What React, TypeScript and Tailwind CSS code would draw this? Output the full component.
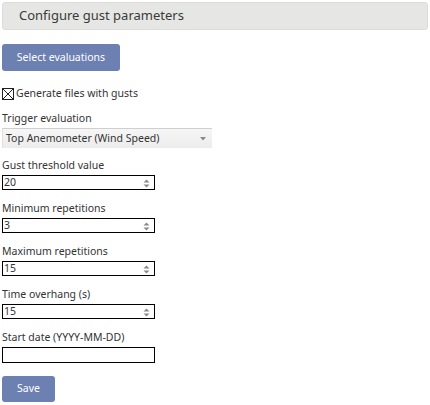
import React from "react";

function Spinner() {
  return (
    <svg width="7" height="9" viewBox="0 0 7 9" className="absolute right-[4px] top-[3px]">
      <path d="M0.5 3.5 L3.5 0.5 L6.5 3.5 Z" fill="#8a8a8a" />
      <path d="M0.5 5.5 L3.5 8.5 L6.5 5.5 Z" fill="#8a8a8a" />
    </svg>
  );
}

function NumberField({ label, value }: { label: string; value: string }) {
  return (
    <div className="flex flex-col">
      <div className="text-[10.5px] leading-[14px] text-[#333] pl-[2px] mb-[3px]">{label}</div>
      <div className="relative w-[153px] h-[15px] border border-black bg-white ml-[2px]">
        <span className="absolute left-[1px] top-[-1px] text-[10.5px] leading-[15px] text-[#333]">{value}</span>
        <Spinner />
      </div>
    </div>
  );
}

export default function App() {
  return (
    <div
      className="w-[430px] h-[405px] bg-white text-[#333]"
      style={{ fontFamily: '"Noto Sans", "Open Sans", sans-serif' }}
    >
      <div className="pt-[2px] px-[2px]">
        <div className="h-[28px] rounded-[3px] bg-[#e6e7e5] border border-[#dcdddb] flex items-center pl-[16px] text-[13px] text-[#3a3a3a]">
          Configure gust parameters
        </div>
      </div>

      <div className="px-[2px] mt-[14px]">
        <button className="w-[118px] h-[27px] rounded-[3px] bg-[#6d80b2] text-white text-[10.5px] flex items-center justify-center">
          Select evaluations
        </button>
      </div>

      <div className="flex items-center mt-[16px] pl-[2px] h-[14px]">
        <svg width="12" height="12" viewBox="0 0 12 12">
          <rect x="0.5" y="0.5" width="11" height="11" fill="white" stroke="#222" />
          <path d="M1 1 L11 11 M11 1 L1 11" stroke="#222" strokeWidth="1" />
        </svg>
        <span className="ml-[2px] text-[10.5px] text-[#333]">Generate files with gusts</span>
      </div>

      <div className="mt-[10px] text-[10.5px] leading-[14px] pl-[2px]">Trigger evaluation</div>
      <div className="mt-[3px] ml-[2px] w-[210px] h-[20px] border-t border-[#cfcfcf] border-l border-l-[#e0e0e0] bg-gradient-to-b from-[#f6f6f6] to-[#ececec] flex items-center justify-between pl-[3px] pr-[6px]">
        <span className="text-[10.5px] text-[#333]">Top Anemometer (Wind Speed)</span>
        <svg width="6" height="4" viewBox="0 0 6 4">
          <path d="M0 0 L6 0 L3 3.5 Z" fill="#888" />
        </svg>
      </div>

      <div className="flex flex-col gap-[11px] mt-[10px]">
        <NumberField label="Gust threshold value" value="20" />
        <NumberField label="Minimum repetitions" value="3" />
        <NumberField label="Maximum repetitions" value="15" />
        <NumberField label="Time overhang (s)" value="15" />
        <div className="flex flex-col">
          <div className="text-[10.5px] leading-[14px] pl-[2px] mb-[3px]">Start date (YYYY-MM-DD)</div>
          <div className="w-[153px] h-[16px] border border-black bg-white ml-[2px]" />
        </div>
      </div>

      <div className="px-[2px] mt-[13px]">
        <button className="w-[53px] h-[26px] rounded-[3px] bg-[#6d80b2] text-white text-[10.5px] flex items-center justify-center">
          Save
        </button>
      </div>
    </div>
  );
}
